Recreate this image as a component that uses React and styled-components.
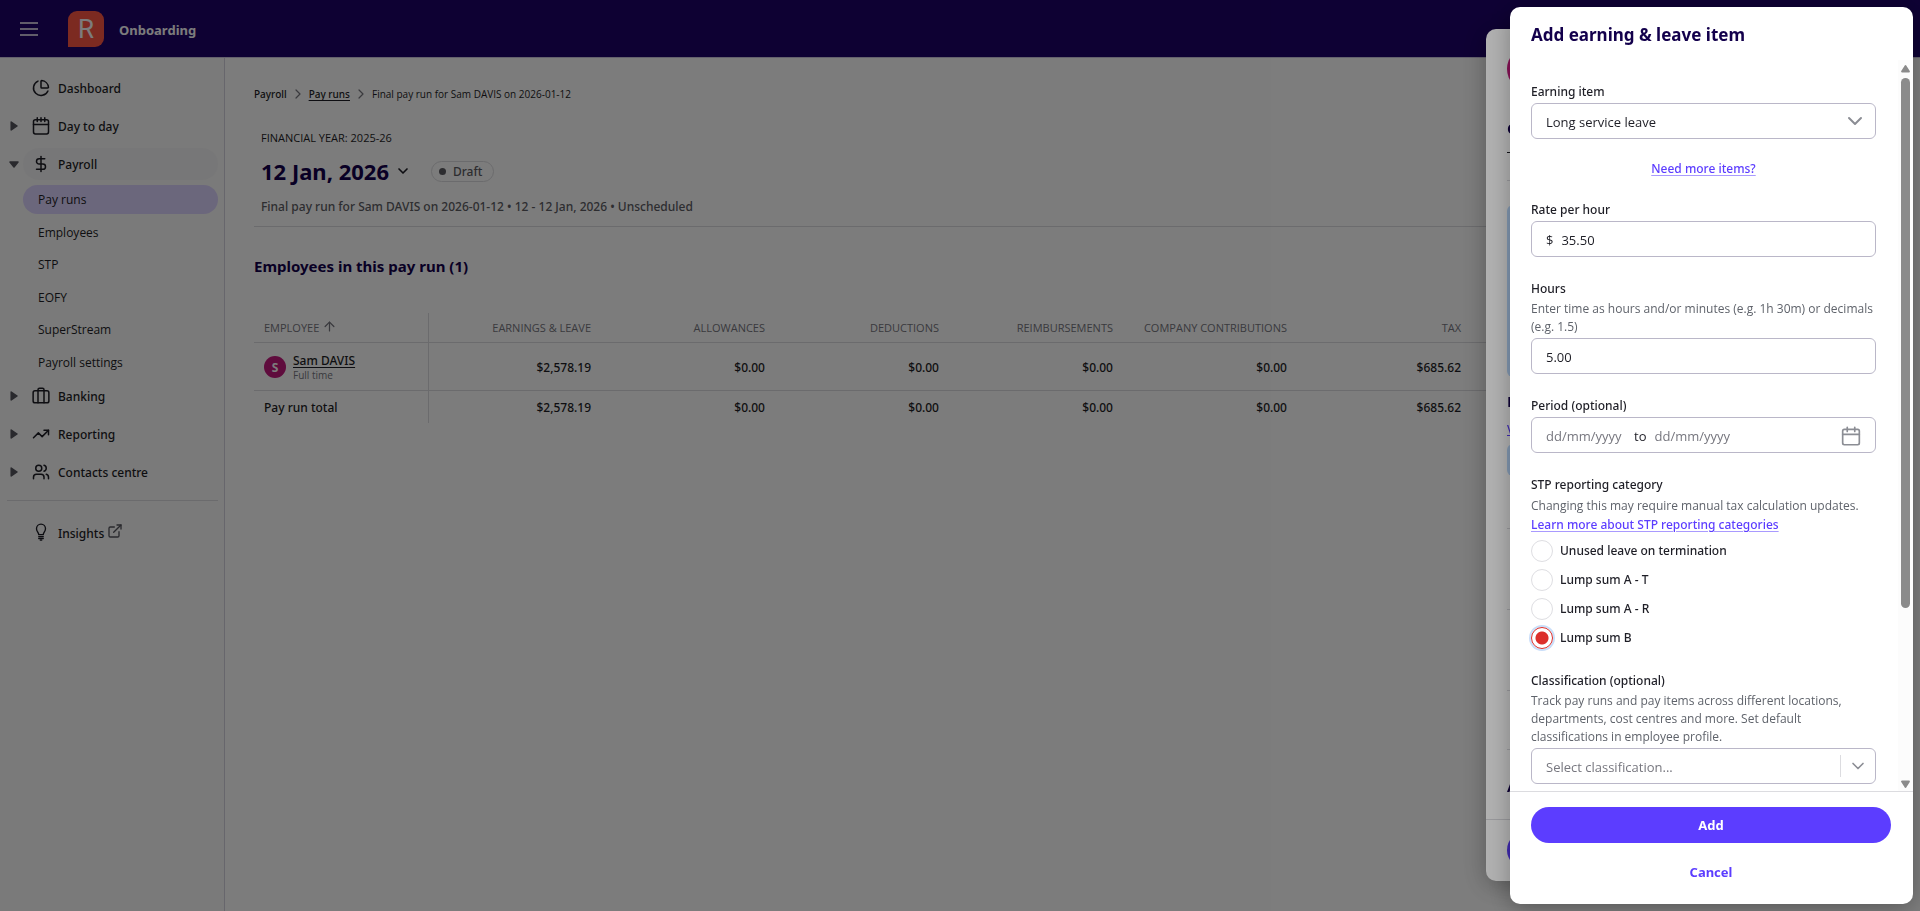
import React, { useState } from 'react'
import styled, { createGlobalStyle } from 'styled-components'
import {
  ArrowUp,
  ChevronDown,
  ChevronRight,
  DollarSign,
  ExternalLink,
  PieChart,
  TrendingUp,
  Users,
} from 'lucide-react'

const GlobalStyle = createGlobalStyle`
  * { box-sizing: border-box; }

  body {
    margin: 0;
    color: #1e1e26;
    background: #fff;
    font-family: 'Open Sans', 'Noto Sans', sans-serif;
    font-size: 12px;
  }

  h1, h2, h3, p, fieldset {
    margin: 0;
    padding: 0;
    border: 0;
  }

  button, input, select {
    font: inherit;
    color: inherit;
  }

  button { cursor: pointer; }
`

const medium = `
  font-family: 'Noto Sans', 'Open Sans', sans-serif;
  font-weight: 500;
`

/* icons that have no match in the package */

const Svg = ({ size = 18, children, ...props }) => (
  <svg
    width={size}
    height={size}
    viewBox="0 0 24 24"
    fill="none"
    stroke="currentColor"
    strokeWidth="2"
    strokeLinecap="round"
    strokeLinejoin="round"
    aria-hidden="true"
    {...props}
  >
    {children}
  </svg>
)

const MenuIcon = () => (
  <svg width="18" height="14" viewBox="0 0 18 14" stroke="currentColor" strokeWidth="1.4" aria-hidden="true">
    <path d="M0 1h18M0 7h18M0 13h18" />
  </svg>
)

const CalendarIcon = props => (
  <Svg {...props}>
    <rect x="2" y="3.500" width="20" height="19" rx="2.500" />
    <path d="M2 10h20M7 1v5M12 1v5M17 1v5" />
  </Svg>
)

const DateIcon = props => (
  <Svg {...props}>
    <rect x="2" y="4" width="20" height="18.5" rx="2" />
    <path d="M2 10h20M7.5 1.5v5M16.5 1.5v5" />
  </Svg>
)

const BriefcaseIcon = props => (
  <Svg {...props}>
    <rect x="1.5" y="5" width="21" height="16" rx="2.5" />
    <path d="M8 21V3.500a2 2 0 0 1 2-2h4a2 2 0 0 1 2 2V21" />
  </Svg>
)

const BulbIcon = props => (
  <Svg {...props} strokeWidth="1.8">
    <path d="M9 15.500c0-3-3-4-3-8a6 6 0 0 1 12 0c0 4-3 5-3 8z" />
    <path d="M9 18.200h6M9 20.600h6M11 22.800h2" />
  </Svg>
)

const Layout = styled.div`
  min-height: 100vh;
  display: flex;
  flex-direction: column;
`

const Header = styled.header`
  height: 58px;
  padding: 0 20px;
  display: flex;
  align-items: center;
  background: #1d036a;
  border-bottom: 1px solid #cdc8e0;
  color: #fff;
`

const MenuButton = styled.button`
  display: flex;
  padding: 0;
  border: 0;
  background: none;
`

const Logo = styled.div`
  width: 36px;
  height: 36px;
  margin: 0 15px 0 30px;
  border-radius: 9px 9px 9px 0;
  display: flex;
  align-items: center;
  justify-content: center;
  background: #ff5845;
  font-family: Roboto, sans-serif;
  font-size: 26px;
  font-weight: 400;
`

const Company = styled.span`
  font-family: 'Noto Sans', sans-serif;
  font-size: 13px;
  font-weight: 700;
  padding-top: 2px;
`

const Body = styled.div`
  flex: 1;
  display: flex;
`

const Sidebar = styled.nav`
  flex: 0 0 225px;
  padding: 11px 6px 0 0;
  background: #fafafa;
  border-right: 1px solid #d4d1de;
`

const NavRow = styled.div`
  display: flex;
  align-items: center;
  height: 38px;
`

const Caret = styled.button`
  width: 23px;
  height: 20px;
  padding: 0 0 0 5px;
  border: 0;
  background: none;
  color: #56565e;
  display: flex;
  align-items: center;
  justify-content: center;
`

const CaretSpace = styled.span`
  width: 23px;
`

const NavLink = styled.a`
  ${medium}
  flex: 1;
  height: 32px;
  padding: 0 9px;
  border-radius: 16px;
  display: flex;
  align-items: center;
  gap: 8px;
  color: inherit;
  text-decoration: none;
  background: ${props => (props.$open ? '#f5f5f6' : 'none')};
`

const SubList = styled.div`
  height: 194px;
  margin-left: 23px;
  padding-top: 2px;
  display: flex;
  flex-direction: column;
  justify-content: space-between;
`

const SubLink = styled.a`
  height: 29px;
  padding: 0 15px;
  border-radius: 15px;
  display: flex;
  align-items: center;
  color: inherit;
  text-decoration: none;
  background: ${props => (props.$active ? '#ddd3ff' : 'none')};
`

const NavDivider = styled.hr`
  height: 1px;
  margin: 9px 0 12px 7px;
  border: 0;
  background: #dcdce0;
`

const Main = styled.main`
  flex: 1;
  min-width: 0;
  padding: 28px 24px 0 29px;
`

const Crumbs = styled.nav`
  height: 16px;
  display: flex;
  align-items: center;
  gap: 3px;
  font-size: 10px;

  svg { color: #77777f; }
`

const Crumb = styled.span`
  ${medium}
`

const CrumbLink = styled.a`
  ${medium}
  color: inherit;
  text-underline-offset: 2px;
`

const Intro = styled.section`
  margin-top: 28px;
  padding: 0 7px 10px;
  border-bottom: 1px solid #dcdce0;
`

const Year = styled.p`
  font-size: 11px;
  line-height: 16px;
`

const TitleRow = styled.div`
  height: 32px;
  margin: 9px 0 11px;
  display: flex;
  align-items: center;
  gap: 6px;
`

const Title = styled.h1`
  font-family: 'Noto Sans', sans-serif;
  font-size: 22px;
  line-height: 32px;
  color: #13004c;
`

const IconButton = styled.button`
  padding: 0;
  border: 0;
  background: none;
  color: ${props => props.$color || 'inherit'};
  display: flex;
`

const Badge = styled.span`
  ${medium}
  height: 21px;
  margin-left: 14px;
  padding: 0 11px 0 7px;
  border: 1px solid #dcdce0;
  border-radius: 11px;
  display: flex;
  align-items: center;
  gap: 7px;
  color: #5d5d64;

  &::before {
    content: '';
    width: 7px;
    height: 7px;
    border-radius: 50%;
    background: #5d5d64;
  }
`

const Subtitle = styled.p`
  ${medium}
  line-height: 18px;
  color: #5d5d64;
`

const SectionTitle = styled.h2`
  margin: 27px 0 35px;
  font-family: 'Noto Sans', sans-serif;
  font-size: 15px;
  line-height: 24px;
  color: #13004c;
`

const Table = styled.table`
  ${medium}
  width: 100%;
  table-layout: fixed;
  border-spacing: 0;

  thead tr > *,
  tbody tr:not(:last-child) > * {
    border-bottom: 1px solid #dcdce0;
  }
`

const Col = styled.col`
  width: ${props => (props.$first ? 175 : 174)}px;
`

const Th = styled.th`
  height: 30px;
  padding: 0 ${props => (props.$first ? 10 : 12)}px 1px;
  font-family: 'Open Sans', sans-serif;
  font-size: 11px;
  font-weight: 400;
  white-space: nowrap;
  text-align: ${props => (props.$first ? 'left' : 'right')};
  color: #77777f;
  ${props => props.$first && 'border-right: 1px solid #dcdce0;'}

  svg { vertical-align: -2px; }
`

const Td = styled.td`
  height: ${props => (props.$short ? 32 : 48)}px;
  padding: 1px ${props => (props.$first ? 10 : 12)}px 0;
  text-align: ${props => (props.$first ? 'left' : 'right')};
  ${props => props.$first && 'border-right: 1px solid #dcdce0;'}
`

const Person = styled.div`
  display: flex;
  align-items: center;
  gap: 7px;
`

const Avatar = styled.span`
  width: ${props => props.$size}px;
  height: ${props => props.$size}px;
  border-radius: 50%;
  display: flex;
  align-items: center;
  justify-content: center;
  flex: none;
  background: #c4197d;
  color: #fff;
  font-size: 12px;
  font-weight: 700;
`

const PersonLink = styled.a`
  display: block;
  line-height: 15px;
  color: inherit;
  text-underline-offset: 2px;
`

const PersonNote = styled.span`
  font-family: 'Open Sans', sans-serif;
  font-size: 10px;
  font-weight: 400;
  line-height: 14px;
  display: block;
  color: #77777f;
`

const Backdrop = styled.div`
  position: fixed;
  inset: 0;
  background: rgba(0, 0, 0, 0.3);
`

const Drawer = styled.section`
  position: fixed;
  top: ${props => (props.$back ? 29 : 7)}px;
  bottom: ${props => (props.$back ? 30 : 7)}px;
  right: ${props => (props.$back ? 31 : 7)}px;
  width: 403px;
  border-radius: 10px;
  overflow: hidden;
  display: flex;
  flex-direction: column;
  background: #fff;
  box-shadow: 0 4px 24px rgba(0, 0, 0, 0.3);
`

const BackContent = styled.div`
  flex: 1;
  min-height: 0;
  overflow: hidden;
  padding: 18px 21px 0;
`

const BackTitle = styled.h3`
  margin-top: ${props => props.$gap}px;
  font-family: 'Noto Sans', sans-serif;
  font-size: 15px;
  line-height: 24px;
  color: #13004c;
`

const BackDash = styled.div`
  width: 8px;
  height: 1px;
  margin: 12px 0 27px;
  background: #1e1e26;
`

const BackLine = styled.hr`
  height: 1px;
  margin: ${props => props.$gap}px 0 0;
  border: 0;
  background: #dcdce0;
`

const BackNotice = styled.div`
  height: ${props => props.$height}px;
  margin-top: ${props => props.$gap}px;
  border-radius: 6px;
  background: #bcdcff;
`

const BackLink = styled.a`
  ${medium}
  display: block;
  margin-top: 8px;
  line-height: 18px;
  color: #5c3dff;
`

const DrawerTitle = styled.h2`
  height: 53px;
  padding: 1px 21px 0;
  font-family: 'Noto Sans', sans-serif;
  font-size: 17px;
  line-height: 53px;
  color: #13004c;
`

const DrawerBody = styled.div`
  flex: 1;
  min-height: 0;
  display: flex;
`

const Form = styled.form`
  flex: 1;
  min-width: 0;
  padding: 21px 22px 0 21px;
  overflow: hidden;
  display: flex;
  flex-direction: column;
  gap: 21px;
`

const Field = styled.div`
  display: flex;
  flex-direction: column;
  gap: 2px;
`

const Label = styled.label`
  ${medium}
  display: block;
  padding-top: 2px;
  line-height: 18px;
`

const Help = styled.p`
  line-height: 18px;
  color: #5f636b;
`

const Control = styled.div`
  height: 36px;
  border: 1px solid #bab7c8;
  border-radius: 6px;
  display: flex;
  align-items: center;
  padding: 1px 14px 0;
  gap: 8px;
  font-size: 13px;
`

const Input = styled.input`
  flex: ${props => (props.$width ? `0 0 ${props.$width}px` : 1)};
  min-width: 0;
  width: ${props => props.$width || 100}px;
  padding: 0;
  border: 0;
  outline: 0;
  background: none;

  &::placeholder {
    color: #77777f;
    opacity: 1;
  }
`

const Spacer = styled.span`
  flex: 1;
`

/* the arrow shares the grid cell of the select it belongs to */
const SelectControl = styled(Control)`
  display: grid;
  padding: 0;

  & > * { grid-area: 1 / 1; }
`

const Select = styled.select`
  width: 100%;
  height: 34px;
  padding: 1px 14px 0;
  border: 0;
  outline: 0;
  appearance: none;
  background: none;
  color: ${props => (props.$empty ? '#77777f' : 'inherit')};
`

const SelectArrow = styled.span`
  justify-self: end;
  height: 22px;
  padding: 0 ${props => (props.$divided ? 7 : 8)}px;
  border-left: ${props => (props.$divided ? '1px solid #dcdce0' : '0')};
  display: flex;
  align-items: center;
  color: #8b8d94;
  pointer-events: none;
`

const TextLink = styled.a`
  ${medium}
  align-self: ${props => (props.$center ? 'center' : 'flex-start')};
  display: block;
  line-height: ${props => (props.$center ? 18 : 20)}px;
  color: #5c3dff;
  text-decoration-color: #a99aff;
  text-underline-offset: 2px;
`

const Radios = styled.fieldset`
  min-width: 0;

  legend {
    ${medium}
    padding: 2px 0 0;
    margin-bottom: 3px;
    line-height: 18px;
  }
`

const RadioList = styled.div`
  margin-top: 5px;
  display: flex;
  flex-direction: column;
  gap: 7px;
`

const RadioLabel = styled.label`
  ${medium}
  display: flex;
  align-items: center;
  gap: 7px;
  line-height: 22px;
`

const Radio = styled.input`
  appearance: none;
  width: 22px;
  height: 22px;
  margin: 0;
  border: 1px solid #dedee2;
  border-radius: 50%;
  background: #fff;

  &:checked {
    border-color: #dc2f2b;
    background: radial-gradient(circle, #dc2f2b 6px, #fff 7px);
    box-shadow: 0 0 0 2px #c9def9;
  }
`

const Scrollbar = styled.div`
  flex: 0 0 15px;
  padding: 4px 3px 2px;
  display: flex;
  flex-direction: column;
  align-items: center;
  background: #fcfcfc;
  color: #8b8b8b;
`

const Track = styled.div`
  flex: 1;
  width: 9px;
  margin: 5px 0;
`

const Thumb = styled.div`
  height: 76%;
  border-radius: 5px;
  background: #8b8b8b;
`

const Footer = styled.footer`
  border-top: 1px solid #dcdce0;
  padding: ${props => (props.$back ? '12px 21px 13px' : '15px 22px 16px 21px')};
  display: flex;
  flex-direction: column;
  gap: 13px;
`

const Button = styled.button`
  height: ${props => (props.$plain ? 32 : 36)}px;
  border: 0;
  border-radius: 18px;
  background: ${props => (props.$plain ? 'none' : '#5c3dff')};
  color: ${props => (props.$plain ? '#5c3dff' : '#fff')};
  font-family: 'Noto Sans', sans-serif;
  font-size: 13px;
  font-weight: 700;
`

const CaretRight = () => (
  <svg width="8" height="10" viewBox="0 0 8 10" aria-hidden="true">
    <path d="M1.200 1v8L7 5z" fill="currentColor" stroke="currentColor" strokeWidth="1.500" strokeLinejoin="round" />
  </svg>
)

const CaretDown = () => (
  <svg width="10" height="7" viewBox="0 0 10 7" aria-hidden="true">
    <path d="M1 1h8L5 6z" fill="currentColor" stroke="currentColor" strokeWidth="1.500" strokeLinejoin="round" />
  </svg>
)

const ScrollArrow = ({ down }) => (
  <svg width="9" height="9" viewBox="0 0 9 9" aria-hidden="true">
    <path
      d={down ? 'M1 1.500h7L4.500 7z' : 'M1 7.500h7L4.500 2z'}
      fill="currentColor"
      stroke="currentColor"
      strokeWidth="1.800"
      strokeLinejoin="round"
    />
  </svg>
)

const payrollPages = ['Pay runs', 'Employees', 'STP', 'EOFY', 'SuperStream', 'Payroll settings']

const columns = [
  'Earnings & leave',
  'Allowances',
  'Deductions',
  'Reimbursements',
  'Company contributions',
  'Tax',
]

const amounts = ['$2,578.19', '$0.00', '$0.00', '$0.00', '$0.00', '$685.62']

const categories = ['Unused leave on termination', 'Lump sum A - T', 'Lump sum A - R', 'Lump sum B']

const NavItem = ({ icon: Icon, label, expandable, open, children }) => (
  <NavRow>
    {expandable
      ? <Caret aria-label={label} aria-expanded={!!open}>{open ? <CaretDown /> : <CaretRight />}</Caret>
      : <CaretSpace />}
    <NavLink href="#" $open={open}>
      <Icon size={18} />
      <span>{label}{children}</span>
    </NavLink>
  </NavRow>
)

const ExternalMark = styled(ExternalLink)`
  margin-left: 3px;
  vertical-align: -1px;
  color: #56565e;
`

const PayRun = () => (
  <Main>
    <Crumbs aria-label="Breadcrumb">
      <Crumb>Payroll</Crumb>
      <ChevronRight size={16} strokeWidth={1.8} />
      <CrumbLink href="#">Pay runs</CrumbLink>
      <ChevronRight size={16} strokeWidth={1.8} />
      <span>Final pay run for Sam DAVIS on 2026-01-12</span>
    </Crumbs>

    <Intro>
      <Year>FINANCIAL YEAR: 2025-26</Year>
      <TitleRow>
        <Title>12 Jan, 2026</Title>
        <IconButton aria-label="Change pay run">
          <ChevronDown size={16} strokeWidth={2.5} />
        </IconButton>
        <Badge>Draft</Badge>
      </TitleRow>
      <Subtitle>Final pay run for Sam DAVIS on 2026-01-12 • 12 - 12 Jan, 2026 • Unscheduled</Subtitle>
    </Intro>

    <SectionTitle>Employees in this pay run (1)</SectionTitle>

    <Table>
      <colgroup>
        <Col $first />
        {columns.map(name => <Col key={name} />)}
        <col />
      </colgroup>
      <thead>
        <tr>
          <Th $first>EMPLOYEE <ArrowUp size={15} /></Th>
          {columns.map(name => <Th key={name}>{name.toUpperCase()}</Th>)}
          <td />
        </tr>
      </thead>
      <tbody>
        <tr>
          <Td $first>
            <Person>
              <Avatar $size={22}>S</Avatar>
              <div>
                <PersonLink href="#">Sam DAVIS</PersonLink>
                <PersonNote>Full time</PersonNote>
              </div>
            </Person>
          </Td>
          {amounts.map((amount, i) => <Td key={i}>{amount}</Td>)}
          <td />
        </tr>
        <tr>
          <Td $first $short>Pay run total</Td>
          {amounts.map((amount, i) => <Td key={i} $short>{amount}</Td>)}
          <td />
        </tr>
      </tbody>
    </Table>
  </Main>
)

const EmployeeDrawer = () => (
  <Drawer $back>
    <BackContent>
      <Avatar $size={44} />
      <BackTitle $gap={25}>G</BackTitle>
      <BackDash />
      <BackLine $gap={0} />
      <BackNotice $gap={24} $height={172} />
      <BackTitle $gap={12}>E</BackTitle>
      <BackLink href="#">V</BackLink>
      <BackNotice $gap={5} $height={32} />
      <BackLine $gap={52} />
      <BackLine $gap={80} />
      <BackLine $gap={80} />
      <BackLine $gap={58} />
      <BackTitle $gap={24}>A</BackTitle>
    </BackContent>
    <Footer $back>
      <Button aria-label="Save" />
    </Footer>
  </Drawer>
)

const EarningDrawer = () => {
  const [category, setCategory] = useState('Lump sum B')
  const [rate, setRate] = useState('35.50')
  const [hours, setHours] = useState('5.00')

  return (
    <Drawer>
      <DrawerTitle>Add earning &amp; leave item</DrawerTitle>
      <DrawerBody>
        <Form>
          <Field>
            <Label htmlFor="item">Earning item</Label>
            <SelectControl>
              <Select id="item">
                <option>Long service leave</option>
              </Select>
              <SelectArrow><ChevronDown size={24} /></SelectArrow>
            </SelectControl>
          </Field>

          <TextLink href="#" $center>Need more items?</TextLink>

          <Field>
            <Label htmlFor="rate">Rate per hour</Label>
            <Control>
              <span>$</span>
              <Input id="rate" value={rate} onChange={e => setRate(e.target.value)} />
            </Control>
          </Field>

          <Field>
            <Label htmlFor="hours">Hours</Label>
            <Help>Enter time as hours and/or minutes (e.g. 1h 30m) or decimals (e.g. 1.5)</Help>
            <Control>
              <Input id="hours" value={hours} onChange={e => setHours(e.target.value)} />
            </Control>
          </Field>

          <Field>
            <Label htmlFor="from">Period (optional)</Label>
            <Control>
              <Input id="from" $width={80} placeholder="dd/mm/yyyy" />
              <label htmlFor="to">to</label>
              <Input id="to" $width={80} placeholder="dd/mm/yyyy" />
              <Spacer />
              <IconButton type="button" aria-label="Choose period" $color="#8b8d94">
                <DateIcon size={20} />
              </IconButton>
            </Control>
          </Field>

          <Radios>
            <legend>STP reporting category</legend>
            <Help>Changing this may require manual tax calculation updates.</Help>
            <TextLink href="#">Learn more about STP reporting categories</TextLink>
            <RadioList>
              {categories.map(name => (
                <RadioLabel key={name}>
                  <Radio
                    type="radio"
                    name="category"
                    checked={category === name}
                    onChange={() => setCategory(name)}
                  />
                  {name}
                </RadioLabel>
              ))}
            </RadioList>
          </Radios>

          <Field>
            <Label htmlFor="classification">Classification (optional)</Label>
            <Help>
              Track pay runs and pay items across different locations, departments, cost centres
              and more. Set default classifications in employee profile.
            </Help>
            <SelectControl>
              <Select id="classification" $empty>
                <option>Select classification...</option>
              </Select>
              <SelectArrow $divided><ChevronDown size={20} /></SelectArrow>
            </SelectControl>
          </Field>
        </Form>

        <Scrollbar aria-hidden="true">
          <ScrollArrow />
          <Track><Thumb /></Track>
          <ScrollArrow down />
        </Scrollbar>
      </DrawerBody>
      <Footer>
        <Button>Add</Button>
        <Button $plain>Cancel</Button>
      </Footer>
    </Drawer>
  )
}

const App = () => (
  <>
    <GlobalStyle />
    <Layout>
      <Header>
        <MenuButton aria-label="Menu"><MenuIcon /></MenuButton>
        <Logo>R</Logo>
        <Company>Onboarding</Company>
      </Header>
      <Body>
        <Sidebar>
          <NavItem icon={PieChart} label="Dashboard" />
          <NavItem icon={CalendarIcon} label="Day to day" expandable />
          <NavItem icon={DollarSign} label="Payroll" expandable open />
          <SubList>
            {payrollPages.map((page, i) => (
              <SubLink key={page} href="#" $active={i === 0}>{page}</SubLink>
            ))}
          </SubList>
          <NavItem icon={BriefcaseIcon} label="Banking" expandable />
          <NavItem icon={TrendingUp} label="Reporting" expandable />
          <NavItem icon={Users} label="Contacts centre" expandable />
          <NavDivider />
          <NavItem icon={BulbIcon} label="Insights"><ExternalMark size={16} /></NavItem>
        </Sidebar>
        <PayRun />
      </Body>
    </Layout>

    <Backdrop />
    <EmployeeDrawer />
    <Backdrop />
    <EarningDrawer />
  </>
)

export default App
